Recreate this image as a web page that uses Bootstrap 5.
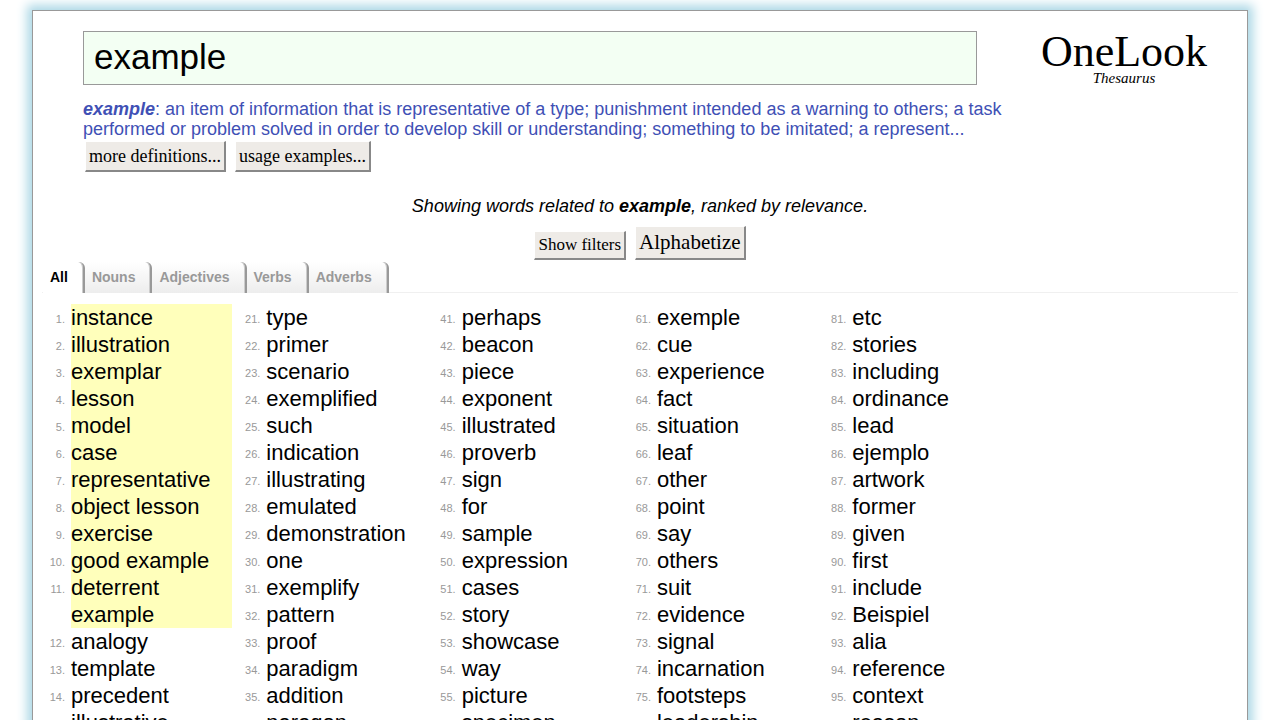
<!DOCTYPE html>
<html lang="en">
<head>
<meta charset="utf-8">
<meta name="viewport" content="width=device-width, initial-scale=1">
<title>OneLook Thesaurus - example</title>
<link href="https://cdn.jsdelivr.net/npm/bootstrap@5.3.0/dist/css/bootstrap.min.css" rel="stylesheet">
<style>
body { font-family: "Liberation Sans", Arial, sans-serif; color: #000; background: #fff; }
a { color: inherit; text-decoration: none; }
.sheet { margin: 10px 32px 0; border: 1px solid #999; box-shadow: 0 0 10px 5px #add8e6; background: #fff; }
.masthead { padding: 20px 16px 0 50px; }
.query { width: calc(100% - 40px); height: 54px; padding: 0 10px 2px; border: 1px solid #999; border-radius: 0; background: #f3fff3; font-size: 35px; color: #000; }
.definition { margin-top: 14px; font-size: 18px; line-height: 20px; color: #4050b5; }
.def-actions { gap: 9px; margin-top: 2px; padding-left: 2px; }
.logo { width: 214px; padding-top: 3px; font-family: "Liberation Serif", serif; }
.logo-name { font-size: 44px; line-height: 36px; }
.logo-sub { font-size: 15px; line-height: 16px; }
.bevel { font-family: "Liberation Serif", serif; font-size: 18px; line-height: 20px; padding: 4px 3px; color: #000; background: #eeebe7; border: solid; border-width: 1px 2px 2px 1px; border-color: #fff #888 #888 #fff; border-radius: 0; }
.bevel-sm { font-size: 17px; line-height: 18px; }
.bevel-lg { font-size: 21px; line-height: 23px; }
.status { margin: 23px 0 9px; font-size: 18px; line-height: 22px; }
.list-actions { gap: 9px; }
.tabbar { margin: 2px 9px 0; padding-left: 1px; border-bottom: 1px solid #f0f0f0; border-radius: 0 6px 0 0; }
.tabbar .nav-link { height: 31px; margin-bottom: -1px; padding: 5px 15px 0 7px; font-size: 14px; line-height: 20px; font-weight: bold; color: #999; background: linear-gradient(#fff, #ededed); border: 0; border-right: 2px solid #999; border-radius: 0 6px 0 0; box-shadow: inset -1px 0 #ccc; }
.tabbar .nav-link.active { color: #000; background: #fff; }
.words { padding: 11px 38px 0 4px; }
.words li { display: flex; font-size: 22px; line-height: 27px; }
.num { width: 34px; padding: 4px 6px 0 0; flex-shrink: 0; text-align: right; font-size: 11px; line-height: 23px; color: #999; }
.word { flex: 1; min-width: 0; }
.best .word { background: #ffb; }
</style>
</head>
<body class="vh-100 overflow-hidden">
<main class="sheet">
  <header class="masthead d-flex">
    <div class="flex-grow-1">
      <input id="q" class="query d-block" type="text" value="example" aria-label="Word or phrase">
      <p class="definition mb-0"><b><i>example</i></b>: an item of information that is representative of a type; punishment intended as a warning to others; a task performed or problem solved in order to develop skill or understanding; something to be imitated; a represent...</p>
      <div class="def-actions d-flex">
        <button type="button" class="bevel">more definitions...</button>
        <button type="button" class="bevel">usage examples...</button>
      </div>
    </div>
    <a href="#" class="logo flex-shrink-0 text-center">
      <div class="logo-name">OneLook</div>
      <div class="logo-sub fst-italic">Thesaurus</div>
    </a>
  </header>

  <p class="status fst-italic text-center">Showing words related to <b>example</b>, ranked by relevance.</p>
  <div class="list-actions d-flex justify-content-center align-items-end">
    <button type="button" class="bevel bevel-sm">Show filters</button>
    <button type="button" class="bevel bevel-lg">Alphabetize</button>
  </div>

  <nav class="tabbar nav">
    <a class="nav-link active" href="#">All</a>
    <a class="nav-link" href="#">Nouns</a>
    <a class="nav-link" href="#">Adjectives</a>
    <a class="nav-link" href="#">Verbs</a>
    <a class="nav-link" href="#">Adverbs</a>
  </nav>

  <div class="words">
    <div class="row row-cols-6 g-0">
      <ol class="list-unstyled mb-0">
        <li class="best"><span class="num">1.</span><a class="word" href="#">instance</a></li>
        <li class="best"><span class="num">2.</span><a class="word" href="#">illustration</a></li>
        <li class="best"><span class="num">3.</span><a class="word" href="#">exemplar</a></li>
        <li class="best"><span class="num">4.</span><a class="word" href="#">lesson</a></li>
        <li class="best"><span class="num">5.</span><a class="word" href="#">model</a></li>
        <li class="best"><span class="num">6.</span><a class="word" href="#">case</a></li>
        <li class="best"><span class="num">7.</span><a class="word" href="#">representative</a></li>
        <li class="best"><span class="num">8.</span><a class="word" href="#">object lesson</a></li>
        <li class="best"><span class="num">9.</span><a class="word" href="#">exercise</a></li>
        <li class="best"><span class="num">10.</span><a class="word" href="#">good example</a></li>
        <li class="best"><span class="num">11.</span><a class="word" href="#">deterrent example</a></li>
        <li><span class="num">12.</span><a class="word" href="#">analogy</a></li>
        <li><span class="num">13.</span><a class="word" href="#">template</a></li>
        <li><span class="num">14.</span><a class="word" href="#">precedent</a></li>
        <li><span class="num">15.</span><a class="word" href="#">illustrative</a></li>
      </ol>
      <ol class="list-unstyled mb-0" start="21">
        <li><span class="num">21.</span><a class="word" href="#">type</a></li>
        <li><span class="num">22.</span><a class="word" href="#">primer</a></li>
        <li><span class="num">23.</span><a class="word" href="#">scenario</a></li>
        <li><span class="num">24.</span><a class="word" href="#">exemplified</a></li>
        <li><span class="num">25.</span><a class="word" href="#">such</a></li>
        <li><span class="num">26.</span><a class="word" href="#">indication</a></li>
        <li><span class="num">27.</span><a class="word" href="#">illustrating</a></li>
        <li><span class="num">28.</span><a class="word" href="#">emulated</a></li>
        <li><span class="num">29.</span><a class="word" href="#">demonstration</a></li>
        <li><span class="num">30.</span><a class="word" href="#">one</a></li>
        <li><span class="num">31.</span><a class="word" href="#">exemplify</a></li>
        <li><span class="num">32.</span><a class="word" href="#">pattern</a></li>
        <li><span class="num">33.</span><a class="word" href="#">proof</a></li>
        <li><span class="num">34.</span><a class="word" href="#">paradigm</a></li>
        <li><span class="num">35.</span><a class="word" href="#">addition</a></li>
        <li><span class="num">36.</span><a class="word" href="#">paragon</a></li>
      </ol>
      <ol class="list-unstyled mb-0" start="41">
        <li><span class="num">41.</span><a class="word" href="#">perhaps</a></li>
        <li><span class="num">42.</span><a class="word" href="#">beacon</a></li>
        <li><span class="num">43.</span><a class="word" href="#">piece</a></li>
        <li><span class="num">44.</span><a class="word" href="#">exponent</a></li>
        <li><span class="num">45.</span><a class="word" href="#">illustrated</a></li>
        <li><span class="num">46.</span><a class="word" href="#">proverb</a></li>
        <li><span class="num">47.</span><a class="word" href="#">sign</a></li>
        <li><span class="num">48.</span><a class="word" href="#">for</a></li>
        <li><span class="num">49.</span><a class="word" href="#">sample</a></li>
        <li><span class="num">50.</span><a class="word" href="#">expression</a></li>
        <li><span class="num">51.</span><a class="word" href="#">cases</a></li>
        <li><span class="num">52.</span><a class="word" href="#">story</a></li>
        <li><span class="num">53.</span><a class="word" href="#">showcase</a></li>
        <li><span class="num">54.</span><a class="word" href="#">way</a></li>
        <li><span class="num">55.</span><a class="word" href="#">picture</a></li>
        <li><span class="num">56.</span><a class="word" href="#">specimen</a></li>
      </ol>
      <ol class="list-unstyled mb-0" start="61">
        <li><span class="num">61.</span><a class="word" href="#">exemple</a></li>
        <li><span class="num">62.</span><a class="word" href="#">cue</a></li>
        <li><span class="num">63.</span><a class="word" href="#">experience</a></li>
        <li><span class="num">64.</span><a class="word" href="#">fact</a></li>
        <li><span class="num">65.</span><a class="word" href="#">situation</a></li>
        <li><span class="num">66.</span><a class="word" href="#">leaf</a></li>
        <li><span class="num">67.</span><a class="word" href="#">other</a></li>
        <li><span class="num">68.</span><a class="word" href="#">point</a></li>
        <li><span class="num">69.</span><a class="word" href="#">say</a></li>
        <li><span class="num">70.</span><a class="word" href="#">others</a></li>
        <li><span class="num">71.</span><a class="word" href="#">suit</a></li>
        <li><span class="num">72.</span><a class="word" href="#">evidence</a></li>
        <li><span class="num">73.</span><a class="word" href="#">signal</a></li>
        <li><span class="num">74.</span><a class="word" href="#">incarnation</a></li>
        <li><span class="num">75.</span><a class="word" href="#">footsteps</a></li>
        <li><span class="num">76.</span><a class="word" href="#">leadership</a></li>
      </ol>
      <ol class="list-unstyled mb-0" start="81">
        <li><span class="num">81.</span><a class="word" href="#">etc</a></li>
        <li><span class="num">82.</span><a class="word" href="#">stories</a></li>
        <li><span class="num">83.</span><a class="word" href="#">including</a></li>
        <li><span class="num">84.</span><a class="word" href="#">ordinance</a></li>
        <li><span class="num">85.</span><a class="word" href="#">lead</a></li>
        <li><span class="num">86.</span><a class="word" href="#">ejemplo</a></li>
        <li><span class="num">87.</span><a class="word" href="#">artwork</a></li>
        <li><span class="num">88.</span><a class="word" href="#">former</a></li>
        <li><span class="num">89.</span><a class="word" href="#">given</a></li>
        <li><span class="num">90.</span><a class="word" href="#">first</a></li>
        <li><span class="num">91.</span><a class="word" href="#">include</a></li>
        <li><span class="num">92.</span><a class="word" href="#">Beispiel</a></li>
        <li><span class="num">93.</span><a class="word" href="#">alia</a></li>
        <li><span class="num">94.</span><a class="word" href="#">reference</a></li>
        <li><span class="num">95.</span><a class="word" href="#">context</a></li>
        <li><span class="num">96.</span><a class="word" href="#">reason</a></li>
      </ol>
    </div>
  </div>
</main>
<script src="https://cdn.jsdelivr.net/npm/bootstrap@5.3.0/dist/js/bootstrap.bundle.min.js"></script>
</body>
</html>
